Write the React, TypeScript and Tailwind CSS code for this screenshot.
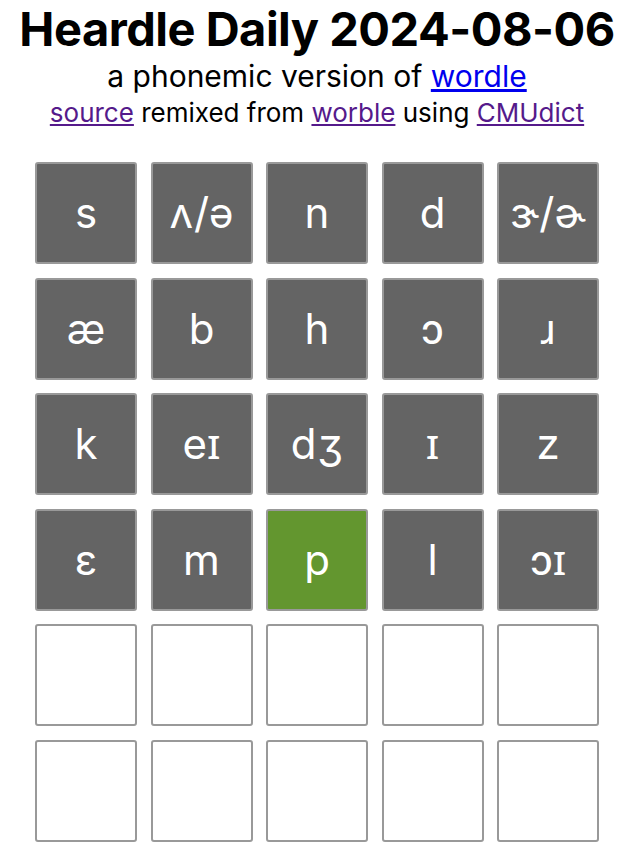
const rows: { t: string; s: "a" | "c" | "e" }[][] = [
  [
    { t: "s", s: "a" },
    { t: "ʌ/ə", s: "a" },
    { t: "n", s: "a" },
    { t: "d", s: "a" },
    { t: "ɝ/ɚ", s: "a" },
  ],
  [
    { t: "æ", s: "a" },
    { t: "b", s: "a" },
    { t: "h", s: "a" },
    { t: "ɔ", s: "a" },
    { t: "ɹ", s: "a" },
  ],
  [
    { t: "k", s: "a" },
    { t: "eɪ", s: "a" },
    { t: "dʒ", s: "a" },
    { t: "ɪ", s: "a" },
    { t: "z", s: "a" },
  ],
  [
    { t: "ɛ", s: "a" },
    { t: "m", s: "a" },
    { t: "p", s: "c" },
    { t: "l", s: "a" },
    { t: "ɔɪ", s: "a" },
  ],
  Array.from({ length: 5 }, () => ({ t: "", s: "e" as const })),
  Array.from({ length: 5 }, () => ({ t: "", s: "e" as const })),
];

function Tile({ t, s }: { t: string; s: "a" | "c" | "e" }) {
  const bg =
    s === "c" ? "bg-[#63962f]" : s === "a" ? "bg-[#646464]" : "bg-white";
  return (
    <div
      className={`${bg} w-[102px] h-[102px] rounded-[3px] border-2 border-[#999] flex items-center justify-center text-white text-[42px] leading-none`}
    >
      {t}
    </div>
  );
}

export default function App() {
  return (
    <main className="min-h-screen bg-white text-black font-['Inter','Noto_Sans',sans-serif] flex flex-col items-center">
      <h1 className="text-[47px] font-bold leading-[57px] tracking-[-0.5px]">
        Heardle Daily 2024-08-06
      </h1>
      <p className="text-[30px] leading-[39px]">
        a phonemic version of{" "}
        <a href="#" className="text-[#0000ee] underline">
          wordle
        </a>
      </p>
      <p className="text-[26px] leading-[34px]">
        <a href="#" className="text-[#551a8b] underline">
          source
        </a>{" "}
        remixed from{" "}
        <a href="#" className="text-[#551a8b] underline">
          worble
        </a>{" "}
        using{" "}
        <a href="#" className="text-[#551a8b] underline">
          CMUdict
        </a>
      </p>
      <div className="mt-[32px] grid grid-cols-5 gap-[13.5px]">
        {rows.map((r, i) =>
          r.map((c, j) => <Tile key={`${i}-${j}`} t={c.t} s={c.s} />)
        )}
      </div>
    </main>
  );
}
